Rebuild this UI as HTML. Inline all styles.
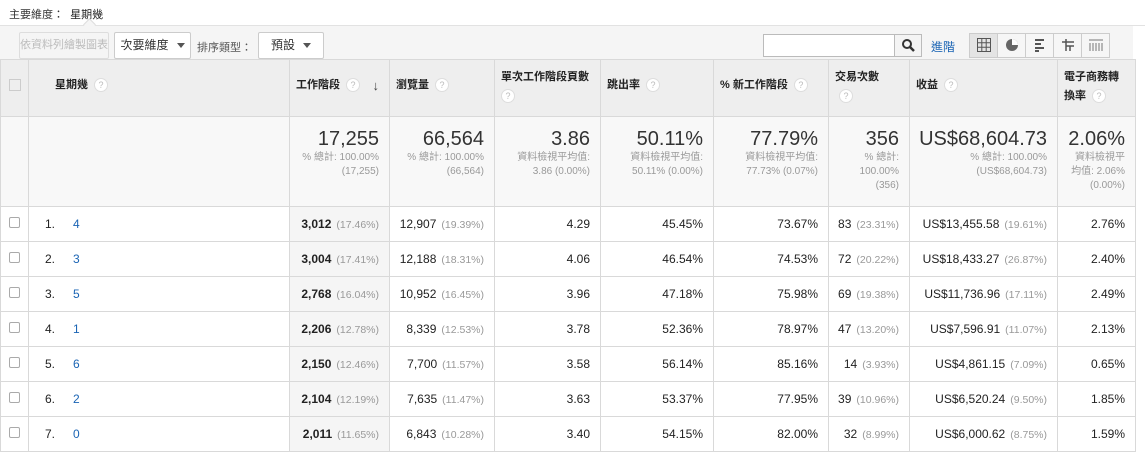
<!DOCTYPE html>
<html><head><meta charset="utf-8"><style>
*{box-sizing:border-box;margin:0;padding:0}
body{width:1145px;height:456px;overflow:hidden;background:#fff;font-family:"Liberation Sans","Noto Sans CJK TC",sans-serif;font-size:12px;color:#222;position:relative}
.abs{position:absolute}
.btn{position:absolute;top:32px;height:27px;border:1px solid #ccc;border-radius:2px;background:#f6f6f6;font-size:12px;line-height:25px;text-align:center;color:#333}
.tri{display:inline-block;width:0;height:0;border-left:4px solid transparent;border-right:4px solid transparent;border-top:5px solid #555;vertical-align:middle;margin-left:8px}
table{position:absolute;left:0;top:59px;border-collapse:collapse;table-layout:fixed;width:1135px}
td,th{border:1px solid #d9d9d9;padding:0 10px 0 8px;text-align:right;vertical-align:middle}
th{background:#eee;height:57px;text-align:left;font-weight:bold;font-size:11px;vertical-align:top;padding-top:16px;line-height:19px;padding-left:6px}
.q{display:inline-block;width:14px;height:14px;border-radius:50%;background:#fff;border:1px solid #ddd;color:#bbb;font-size:9px;line-height:12px;text-align:center;font-weight:normal;vertical-align:middle;margin-left:6px}
tr.sum td{background:#f8f8f8;height:90px;vertical-align:top;padding-top:10px}
.big{font-size:20px;color:#333;line-height:24px}
.sm{font-size:10px;color:#999;line-height:14px}
tr.r td{height:35px;font-size:12px}
.p{color:#999;font-size:10.5px;margin-left:5px}
td.s{background:#f5f5f5}
.cb{display:inline-block;width:11px;height:11px;border:1px solid #aaa;border-radius:2px;background:#fff}
td.c{text-align:center;padding:0}
td.d{text-align:left;padding-left:16px}
a{color:#1a64b4;text-decoration:none;margin-left:18px}
.vb{position:absolute;top:34px;width:28px;height:23px;border-right:1px solid #ccc;text-align:center;line-height:22px;color:#666}
</style></head><body>
<div class="abs" style="left:9px;top:6px;font-size:11px;color:#333">主要維度：&nbsp;&nbsp;<b style="font-weight:normal;color:#222">星期幾</b></div>
<div class="abs" style="left:0;top:25px;width:1145px;height:1px;background:#e2e2e2"></div>
<div class="abs" style="left:0;top:26px;width:1133px;height:33px;background:#f5f5f5"></div>
<div class="abs" style="left:85px;top:20px;width:9px;height:9px;border-left:1px solid #ddd;border-top:1px solid #ddd;background:#f5f5f5;transform:rotate(45deg)"></div>
<div class="btn" style="left:19px;width:90px;color:#bbb;background:#f5f5f5;border-color:#ddd;font-size:11px">依資料列繪製圖表</div>
<div class="btn" style="left:114px;width:77px;background:#fff">次要維度<span class="tri"></span></div>
<div class="abs" style="left:197px;top:39px;font-size:11px;color:#555">排序類型：</div>
<div class="btn" style="left:258px;width:66px;background:#fff">預設<span class="tri"></span></div>
<div class="abs" style="left:763px;top:34px;width:159px;height:23px;border:1px solid #bbb;background:#fff"></div>
<div class="abs" style="left:894px;top:34px;width:28px;height:23px;border:1px solid #bbb;background:#f4f4f4"><svg width="26" height="21" viewBox="0 0 26 21"><circle cx="12" cy="9" r="4" fill="none" stroke="#333" stroke-width="2"/><path d="M15 12l4 4" stroke="#333" stroke-width="2.5"/></svg></div>
<div class="abs" style="left:931px;top:38px;color:#1a64b4">進階</div>
<div class="abs" style="left:969px;top:33px;width:141px;height:25px;border:1px solid #ccc;background:#f6f6f6"></div>
<div class="vb" style="left:970px;background:#e4e4e4"><svg width="14" height="14" viewBox="0 0 14 14" style="margin-top:4px"><path d="M.5.5h13v13H.5zM4.8.5v13M9.2.5v13M.5 4.8h13M.5 9.2h13" fill="none" stroke="#555"/></svg></div>
<div class="vb" style="left:998px"><svg width="14" height="14" style="margin-top:4px"><circle cx="7" cy="7" r="6" fill="#666"/><path d="M7 7V1A6 6 0 0 1 13 7z" fill="#fff"/></svg></div>
<div class="vb" style="left:1026px"><svg width="14" height="14" style="margin-top:4px"><path d="M2 2h9M2 6h6M2 10h9M2 13h4" stroke="#555" stroke-width="2"/></svg></div>
<div class="vb" style="left:1054px"><svg width="14" height="14" style="margin-top:4px"><path d="M1 4h12M5 1v12M5 8h8M9 8v5" stroke="#555" stroke-width="1.5" fill="none"/></svg></div>
<div class="vb" style="left:1082px;border-right:none"><svg width="16" height="12" style="margin-top:5px"><path d="M1 1h14M2 4v8M5 4v8M8 4v8M11 4v8M14 4v8" stroke="#777" stroke-width="1"/></svg></div>
<table>
<colgroup><col style="width:28px"><col style="width:261px"><col style="width:100px"><col style="width:105px"><col style="width:106px"><col style="width:113px"><col style="width:115px"><col style="width:81px"><col style="width:148px"><col style="width:78px"></colgroup>
<tr><th style="padding:0;vertical-align:middle;text-align:center"><span class="cb" style="width:12px;height:12px;border-color:#ccc;border-radius:0;background:#eee"></span></th><th style="padding-left:26px">星期幾<span class="q">?</span></th><th>工作階段<span class="q">?</span><span style="float:right;font-size:13px;color:#444">↓</span></th><th>瀏覽量<span class="q">?</span></th><th style="padding-top:8px">單次工作階段頁數<br><span class="q" style="margin-left:0">?</span></th><th>跳出率<span class="q">?</span></th><th>% 新工作階段<span class="q">?</span></th><th style="padding-top:8px">交易次數<br><span class="q" style="margin-left:4px">?</span></th><th>收益<span class="q">?</span></th><th style="padding-top:8px">電子商務轉<br>換率<span class="q">?</span></th></tr>
<tr class="sum"><td></td><td></td><td><div class="big">17,255</div><div class="sm">% 總計: 100.00%<br>(17,255)</div></td><td><div class="big">66,564</div><div class="sm">% 總計: 100.00%<br>(66,564)</div></td><td><div class="big">3.86</div><div class="sm">資料檢視平均值:<br>3.86 (0.00%)</div></td><td><div class="big">50.11%</div><div class="sm">資料檢視平均值:<br>50.11% (0.00%)</div></td><td><div class="big">77.79%</div><div class="sm">資料檢視平均值:<br>77.73% (0.07%)</div></td><td><div class="big">356</div><div class="sm">% 總計:<br>100.00%<br>(356)</div></td><td><div class="big">US$68,604.73</div><div class="sm">% 總計: 100.00%<br>(US$68,604.73)</div></td><td><div class="big">2.06%</div><div class="sm">資料檢視平<br>均值: 2.06%<br>(0.00%)</div></td></tr>
<tr class="r"><td class="c"><span class="cb"></span></td><td class="d">1.<a>4</a></td><td class="s"><b>3,012</b><span class="p">(17.46%)</span></td><td>12,907<span class="p">(19.39%)</span></td><td>4.29</td><td>45.45%</td><td>73.67%</td><td>83<span class="p">(23.31%)</span></td><td>US$13,455.58<span class="p">(19.61%)</span></td><td>2.76%</td></tr>
<tr class="r"><td class="c"><span class="cb"></span></td><td class="d">2.<a>3</a></td><td class="s"><b>3,004</b><span class="p">(17.41%)</span></td><td>12,188<span class="p">(18.31%)</span></td><td>4.06</td><td>46.54%</td><td>74.53%</td><td>72<span class="p">(20.22%)</span></td><td>US$18,433.27<span class="p">(26.87%)</span></td><td>2.40%</td></tr>
<tr class="r"><td class="c"><span class="cb"></span></td><td class="d">3.<a>5</a></td><td class="s"><b>2,768</b><span class="p">(16.04%)</span></td><td>10,952<span class="p">(16.45%)</span></td><td>3.96</td><td>47.18%</td><td>75.98%</td><td>69<span class="p">(19.38%)</span></td><td>US$11,736.96<span class="p">(17.11%)</span></td><td>2.49%</td></tr>
<tr class="r"><td class="c"><span class="cb"></span></td><td class="d">4.<a>1</a></td><td class="s"><b>2,206</b><span class="p">(12.78%)</span></td><td>8,339<span class="p">(12.53%)</span></td><td>3.78</td><td>52.36%</td><td>78.97%</td><td>47<span class="p">(13.20%)</span></td><td>US$7,596.91<span class="p">(11.07%)</span></td><td>2.13%</td></tr>
<tr class="r"><td class="c"><span class="cb"></span></td><td class="d">5.<a>6</a></td><td class="s"><b>2,150</b><span class="p">(12.46%)</span></td><td>7,700<span class="p">(11.57%)</span></td><td>3.58</td><td>56.14%</td><td>85.16%</td><td>14<span class="p">(3.93%)</span></td><td>US$4,861.15<span class="p">(7.09%)</span></td><td>0.65%</td></tr>
<tr class="r"><td class="c"><span class="cb"></span></td><td class="d">6.<a>2</a></td><td class="s"><b>2,104</b><span class="p">(12.19%)</span></td><td>7,635<span class="p">(11.47%)</span></td><td>3.63</td><td>53.37%</td><td>77.95%</td><td>39<span class="p">(10.96%)</span></td><td>US$6,520.24<span class="p">(9.50%)</span></td><td>1.85%</td></tr>
<tr class="r"><td class="c"><span class="cb"></span></td><td class="d">7.<a>0</a></td><td class="s"><b>2,011</b><span class="p">(11.65%)</span></td><td>6,843<span class="p">(10.28%)</span></td><td>3.40</td><td>54.15%</td><td>82.00%</td><td>32<span class="p">(8.99%)</span></td><td>US$6,000.62<span class="p">(8.75%)</span></td><td>1.59%</td></tr>
</table>
</body></html>
